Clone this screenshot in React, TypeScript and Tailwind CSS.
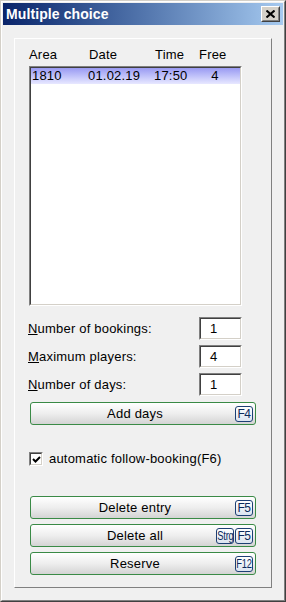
import React from "react";

// Classic sunken edge (list box, text fields, checkbox)
const sunkenOuter = "border border-t-[#808080] border-l-[#808080] border-r-white border-b-white";
const sunkenInner = "border border-t-[#404040] border-l-[#404040] border-r-[#d4d0c8] border-b-[#d4d0c8]";

function KeyCap({ label, tight }: { label: string; tight?: boolean }) {
  return (
    <span className="flex h-[16px] w-[18px] items-center justify-center overflow-hidden rounded-[3px] border border-[#1d3f74] bg-gradient-to-b from-white to-[#dbe4f0] text-[12px] leading-none text-[#0b2a5c]">
      <span className={tight ? "scale-x-[0.78] tracking-[-0.3px]" : "tracking-[-0.4px]"}>{label}</span>
    </span>
  );
}

function ActionButton({ label, keys }: { label: string; keys: string[] }) {
  return (
    <button className="relative ml-[15px] flex h-[23px] w-[226px] items-center justify-center rounded-[3px] border border-[#3a8a46] bg-gradient-to-b from-white via-[#eeeeee] to-[#d4d4d4] pr-[16px] text-[13px] tracking-[0.2px] text-black">
      <span>{label}</span>
      <span className="absolute right-[2px] top-[3px] flex gap-[1px]">
        {keys.map((k) => (
          <KeyCap key={k} label={k} tight={k.length > 2} />
        ))}
      </span>
    </button>
  );
}

function NumberRow({ label, value }: { label: string; value: string }) {
  // first letter is the access key, shown underlined
  return (
    <div className="ml-[13px] flex h-[23px] w-[214px] items-center justify-between">
      <span>
        <span className="underline underline-offset-[1px]">{label[0]}</span>
        {label.slice(1)}
      </span>
      <div className={`h-[23px] w-[43px] ${sunkenOuter}`}>
        <div className={`flex h-full w-full items-center bg-white pl-[9px] ${sunkenInner}`}>{value}</div>
      </div>
    </div>
  );
}

export default function App() {
  return (
    <div
      className="h-[602px] w-[286px] border border-b-[#404040] border-l-[#d4d0c8] border-r-[#404040] border-t-[#d4d0c8] text-[13px] tracking-[0.2px] text-black"
      style={{ fontFamily: '"Liberation Sans", Arial, sans-serif' }}
    >
      <div className="flex h-full flex-col border border-b-[#808080] border-l-white border-r-[#808080] border-t-white bg-[#f0f0f0] p-px">
        {/* Title bar */}
        <div className="flex h-[22px] shrink-0 items-center justify-between bg-gradient-to-r from-[#0a246a] to-[#a6caf0] pl-[3px] pr-[3px]">
          <span className="text-[14px] font-bold leading-[22px] tracking-[0.1px] text-white">Multiple choice</span>
          <div className="border border-b-[#404040] border-l-white border-r-[#404040] border-t-white">
            <div className="flex h-[14px] w-[17px] items-center justify-center border border-b-[#808080] border-l-[#d4d0c8] border-r-[#808080] border-t-[#d4d0c8] bg-[#d4d0c8]">
              <svg width="9" height="8" viewBox="0 0 9 8">
                <path d="M0.5 0.5 L8.5 7.5 M8.5 0.5 L0.5 7.5" stroke="black" strokeWidth="2" />
              </svg>
            </div>
          </div>
        </div>

        {/* Content */}
        <div className="flex-1 px-[11px] pb-[11px] pt-[13px]">
          <div className="flex h-full flex-col border border-b-[#808080] border-l-white border-r-[#808080] border-t-white">
            {/* Column headers */}
            <div className="ml-[14px] mt-[8px] flex h-[15px] leading-[15px]">
              <span className="w-[60px]">Area</span>
              <span className="w-[66px]">Date</span>
              <span className="w-[44px]">Time</span>
              <span>Free</span>
            </div>

            {/* List */}
            <div className={`ml-[14px] mt-[4px] h-[240px] w-[213px] ${sunkenOuter}`}>
              <div className={`h-full w-full bg-white ${sunkenInner}`}>
                <div className="flex h-[16px] items-center bg-gradient-to-b from-[#9a9af2] to-[#e8e8ff] leading-[16px]">
                  <span className="w-[57px] pl-[1px]">1810</span>
                  <span className="w-[66px]">01.02.19</span>
                  <span className="w-[46px]">17:50</span>
                  <span className="w-[30px] text-center">4</span>
                </div>
              </div>
            </div>

            <div className="mt-[11px] flex flex-col gap-[5px]">
              <NumberRow label="Number of bookings:" value="1" />
              <NumberRow label="Maximum players:" value="4" />
              <NumberRow label="Number of days:" value="1" />
            </div>

            <div className="mt-[6px]">
              <ActionButton label="Add days" keys={["F4"]} />
            </div>

            {/* Checkbox */}
            <div className="ml-[14px] mt-[27px] flex h-[14px] items-center">
              <div className={`h-[14px] w-[14px] ${sunkenOuter}`}>
                <div className={`flex h-full w-full items-center justify-center bg-white ${sunkenInner}`}>
                  <svg width="9" height="9" viewBox="0 0 9 9">
                    <path d="M1 4 L3.5 6.5 L8 2" fill="none" stroke="black" strokeWidth="2" />
                  </svg>
                </div>
              </div>
              <span className="ml-[6px]">automatic follow-booking(F6)</span>
            </div>

            <div className="mt-[30px] flex flex-col gap-[5px]">
              <ActionButton label="Delete entry" keys={["F5"]} />
              <ActionButton label="Delete all" keys={["Strg", "F5"]} />
              <ActionButton label="Reserve" keys={["F12"]} />
            </div>
          </div>
        </div>
      </div>
    </div>
  );
}
